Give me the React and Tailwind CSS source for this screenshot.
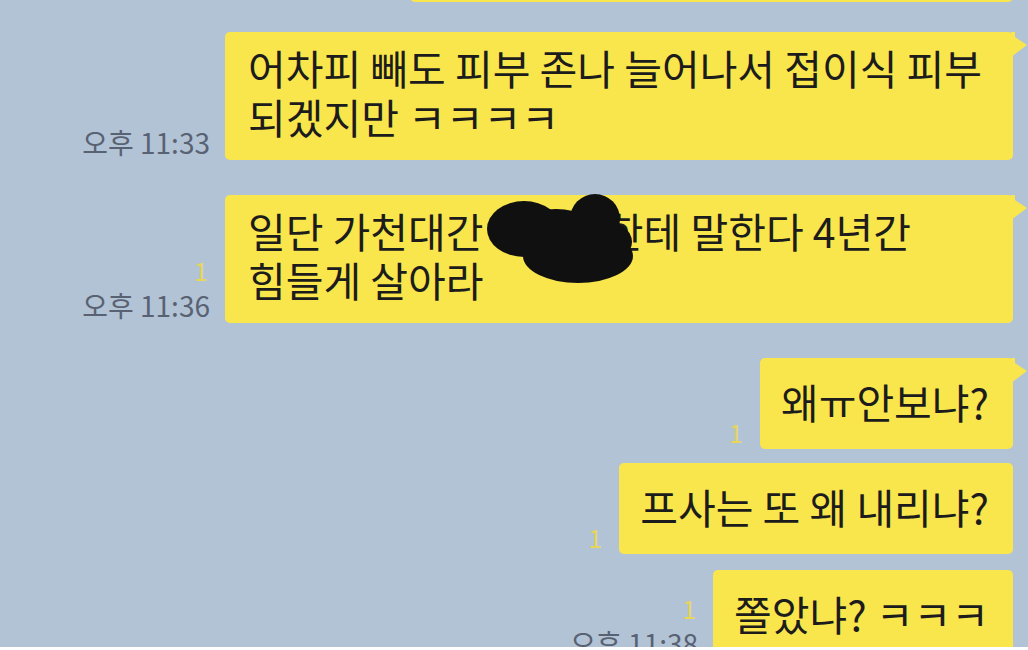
import React from 'react';

const YELLOW = '#f9e64c';

const Tail = () => (
  <svg className="absolute top-0 -right-[14px]" width="16" height="26" viewBox="0 0 16 26">
    <polygon points="0,0 4,0 4,5 16,13 0,25" fill={YELLOW} />
  </svg>
);

// 이름 가린 낙서
const Scribble = () => (
  <svg className="absolute left-[261px] -top-[3px]" width="152" height="94" viewBox="0 0 152 94">
    <g fill="#101010">
      <ellipse cx="38" cy="37" rx="37" ry="28" />
      <ellipse cx="70" cy="44" rx="44" ry="27" />
      <circle cx="109" cy="27" r="25" />
      <ellipse cx="92" cy="64" rx="55" ry="27" />
      <ellipse cx="116" cy="50" rx="30" ry="22" />
    </g>
  </svg>
);

const Row = ({ mt, read, time, children }) => (
  <div className={`flex items-end justify-end gap-[15px] ${mt}`}>
    <div className="mb-[3px] flex flex-col items-end">
      {read && <span className="mb-[2px] pr-[2px] text-[25px] leading-[24px] text-[#e6d659]">1</span>}
      {time && (
        <span className="mt-[6px] whitespace-nowrap text-[28px] leading-[30px] text-[#586272]">{time}</span>
      )}
    </div>
    {children}
  </div>
);

export default function App() {
  return (
    <div className="flex h-[650px] w-[1028px] flex-col overflow-hidden bg-[#b3c3d6] font-['Noto_Sans_CJK_KR','Noto_Sans',sans-serif] text-[#1c1c1c]">
      <div className="flex min-h-0 flex-1 flex-col overflow-hidden pr-[15px]">
        {/* 이전 말풍선 끝자락 */}
        <div className="-mt-[58px] flex justify-end">
          <div className="h-[60px] w-[603px] rounded-[5px] bg-[#f9e64c]" />
        </div>

        <Row mt="mt-[30px]" time="오후 11:33">
          <div className="relative w-[788px] whitespace-nowrap rounded-[5px] bg-[#f9e64c] pb-[19px] pl-[23px] pt-[11px] text-[41px] leading-[49px]">
            어차피 빼도 피부 존나 늘어나서 접이식 피부
            <br />
            되겠지만 ㅋㅋㅋㅋ
            <Tail />
          </div>
        </Row>

        <Row mt="mt-[35px]" read time="오후 11:36">
          <div className="relative w-[788px] whitespace-nowrap rounded-[5px] bg-[#f9e64c] pb-[19px] pl-[23px] pt-[11px] text-[41px] leading-[49px]">
            일단 가천대간 아무개한테 말한다 4년간
            <br />
            힘들게 살아라
            <Scribble />
            <Tail />
          </div>
        </Row>

        <Row mt="mt-[35px]" read>
          <div className="relative whitespace-nowrap rounded-[5px] bg-[#f9e64c] pb-[23px] pl-[21px] pr-[24px] pt-[19px] text-[41px] leading-[49px]">
            왜ㅠ안보냐?
            <Tail />
          </div>
        </Row>

        <Row mt="mt-[14px]" read>
          <div className="whitespace-nowrap rounded-[5px] bg-[#f9e64c] pb-[23px] pl-[21px] pr-[24px] pt-[19px] text-[41px] leading-[49px]">
            프사는 또 왜 내리냐?
          </div>
        </Row>

        <Row mt="mt-[16px]" read time="오후 11:38">
          <div className="shrink-0 whitespace-nowrap rounded-[5px] bg-[#f9e64c] pb-[23px] pl-[21px] pr-[24px] pt-[19px] text-[41px] leading-[49px]">
            쫄았냐? ㅋㅋㅋ
          </div>
        </Row>
      </div>
      <div className="h-[3px] shrink-0 bg-white" />
    </div>
  );
}
